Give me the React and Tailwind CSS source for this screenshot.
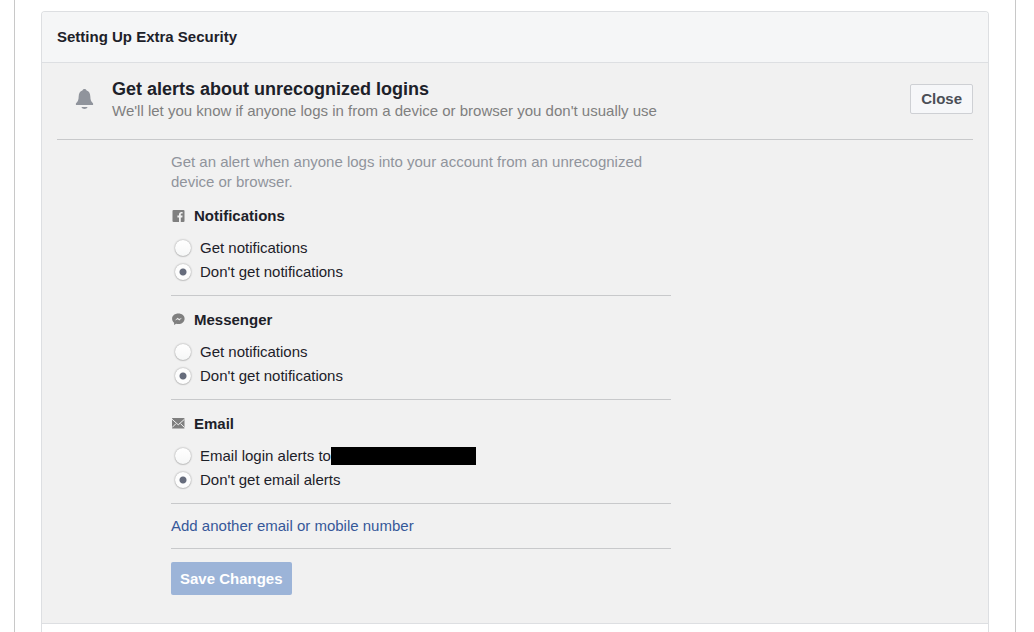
import { useState } from 'react';

function FacebookIcon() {
  return (
    <svg width="14" height="14" viewBox="0 0 14 14" aria-hidden="true">
      <rect x="1.500" y="1" width="12" height="12" rx="1" fill="#7f7f7f" />
      <path d="M8 13V8.400H6.400V6.600H8V5.400c0-1.600.9-2.500 2.400-2.500.6 0 1 .1 1.200.1v1.600h-.8c-.8 0-1 .4-1 1v1h1.800l-.3 1.800H9.800V13z" fill="#f1f1f1" />
    </svg>
  );
}

function MessengerIcon() {
  return (
    <svg width="14" height="14" viewBox="0 0 14 14" aria-hidden="true">
      <path d="M7.400.6C3.800.6 1.100 2.800 1.100 5.700c0 1.700.8 3 2 4V12l2-1.200c.7.2 1.500.3 2.300.3 3.600 0 6.200-2.400 6.200-5.400S11 .6 7.400.6z" fill="#7f7f7f" />
      <path d="M3.900 7.400 6.600 4.700l1.600 1.300L11 4.700 8.300 7.400 6.700 6.200z" fill="#f1f1f1" />
    </svg>
  );
}

function EmailIcon() {
  return (
    <svg width="14" height="14" viewBox="0 0 14 14" aria-hidden="true">
      <rect x="1" y="1" width="12.500" height="10.600" rx=".6" fill="#7f7f7f" />
      <path d="M1 2.200 7.250 7.800l6.250-5.600M1 10.600l4-4M13.500 10.600l-4-4" fill="none" stroke="#f1f1f1" strokeWidth="1" />
    </svg>
  );
}

function BellIcon() {
  return (
    <svg width="20" height="22" viewBox="0 0 20 22" className="shrink-0" aria-hidden="true">
      <path d="M9.500 1c-1.100 0-1.900.7-2.100 1.600C5 3.400 3.800 5.400 3.700 8.200c-.1 3.800-.9 5.300-2.200 6.500-.6.600-.7 1-.7 1.500 0 .6.400.9 1 .9h15.400c.6 0 1-.3 1-.9 0-.5-.1-.9-.7-1.500-1.300-1.200-2.100-2.700-2.200-6.500-.1-2.800-1.300-4.800-3.700-5.600C11.400 1.700 10.600 1 9.500 1z" fill="#90949c" />
      <path d="M6.400 19h6.200c-.5 1.200-1.700 2-3.100 2s-2.600-.8-3.100-2z" fill="#90949c" />
    </svg>
  );
}

function Option({ name, checked, onChange, children }) {
  return (
    <label className="flex h-6 items-center gap-[9px] pl-1">
      <input
        type="radio"
        name={name}
        checked={checked}
        onChange={onChange}
        className="size-4 shrink-0 appearance-none rounded-full bg-white bg-linear-to-b from-white to-[#f6f7f7] shadow-[0_0_2px_rgba(0,0,0,0.4),0_1px_1px_rgba(0,0,0,0.1)] checked:bg-[radial-gradient(circle,#666c7c_0_3px,#fdfdfd_4px)]"
      />
      <span className="flex items-center">{children}</span>
    </label>
  );
}

function AlertGroup({ name, title, icon, onLabel, offLabel }) {
  const [enabled, setEnabled] = useState(false);
  return (
    <div role="radiogroup" aria-labelledby={`${name}-title`} className="border-b border-[#c8c9cb] pt-[14px] pb-[11px]">
      <h3 id={`${name}-title`} className="mb-[10px] flex items-center gap-[9px] font-bold">
        {icon}
        {title}
      </h3>
      <Option name={name} checked={enabled} onChange={() => setEnabled(true)}>
        {onLabel}
      </Option>
      <Option name={name} checked={!enabled} onChange={() => setEnabled(false)}>
        {offLabel}
      </Option>
    </div>
  );
}

export default function App() {
  return (
    <div className="min-h-screen bg-white pr-[18px] pl-[14px] font-['Liberation_Sans',Arial,sans-serif] text-[15px] leading-5 text-[#1d2129]">
      <main className="flex min-h-screen flex-col border-x border-[#c8c8c8] px-[26px] pt-[11px]">
        <section className="flex-1 rounded-t-[4px] border-x border-t border-[#dddfe2]">
          <h1 className="rounded-t-[3px] border-b border-[#dddfe2] bg-[#f5f6f7] px-[15px] py-[15px] font-bold">
            Setting Up Extra Security
          </h1>
          <div className="border-b border-[#dddfe2] bg-[#f1f1f1] px-[15px] pb-7">
            <header className="flex items-center justify-between border-b border-[#c8c9cb] pt-[14px] pb-[18px]">
              <div className="flex items-center gap-[17px] pl-[18px]">
                <BellIcon />
                <div>
                  <h2 className="text-lg leading-6 font-bold">Get alerts about unrecognized logins</h2>
                  <p className="text-[#7f7f7f]">We'll let you know if anyone logs in from a device or browser you don't usually use</p>
                </div>
              </div>
              <button type="button" className="h-[30px] rounded-[2px] border border-[#ced0d4] bg-[#f6f7f9] px-[10px] font-bold text-[#4b4f56]">
                Close
              </button>
            </header>
            <form className="ml-[114px] max-w-[500px] pt-3" onSubmit={(e) => e.preventDefault()}>
              <p className="text-[#90949c]">
                Get an alert when anyone logs into your account from an unrecognized device or browser.
              </p>
              <AlertGroup
                name="notifications"
                title="Notifications"
                icon={<FacebookIcon />}
                onLabel="Get notifications"
                offLabel="Don't get notifications"
              />
              <AlertGroup
                name="messenger"
                title="Messenger"
                icon={<MessengerIcon />}
                onLabel="Get notifications"
                offLabel="Don't get notifications"
              />
              <AlertGroup
                name="email"
                title="Email"
                icon={<EmailIcon />}
                onLabel={
                  <>
                    Email login alerts to
                    <span className="h-[18px] w-[145px] bg-black" />
                  </>
                }
                offLabel="Don't get email alerts"
              />
              <div className="border-b border-[#c8c9cb] py-3">
                <a href="#add" className="text-[#365899]">Add another email or mobile number</a>
              </div>
              <button type="submit" className="mt-[13px] h-[33px] rounded-[2px] bg-[#9cb4d8] px-[9px] font-bold text-white">
                Save Changes
              </button>
            </form>
          </div>
        </section>
      </main>
    </div>
  );
}
